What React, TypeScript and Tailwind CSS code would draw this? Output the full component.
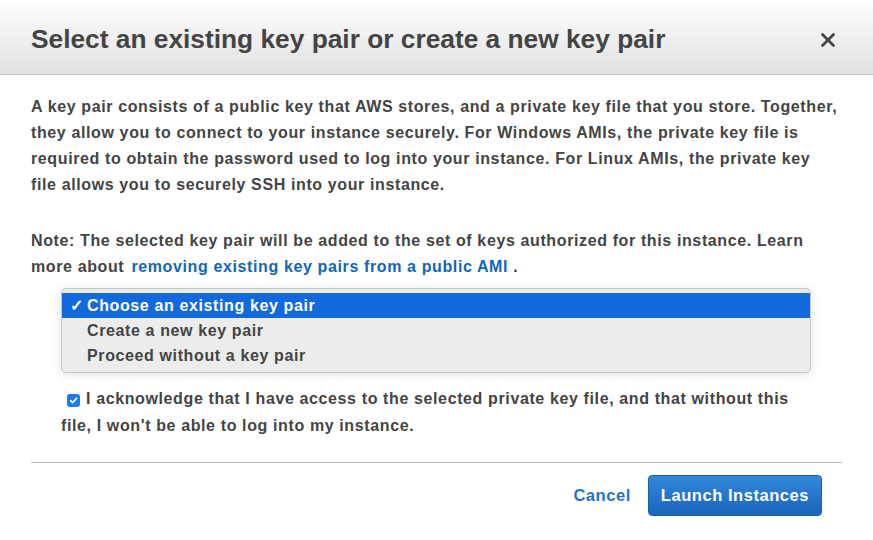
import { X } from 'lucide-react'

const options = ['Choose an existing key pair', 'Create a new key pair', 'Proceed without a key pair']

const App = () => {
  return (
    <div className="h-[540px] w-[873px] overflow-hidden bg-white font-['Liberation_Sans',Arial,sans-serif] text-[#444]">
      <header className="flex h-[75px] items-center justify-between border-b border-[#c6c6c6] bg-gradient-to-b from-white to-[#e1e1e1] pl-[31px] pr-[34px]">
        <h1 className="pt-[6px] text-[26.3px] font-bold text-[#444]">
          Select an existing key pair or create a new key pair
        </h1>
        <button type="button" className="mt-[6px] text-[#444]">
          <X size={22} strokeWidth={3} />
        </button>
      </header>

      <div className="whitespace-nowrap px-[31px] pt-[19px] tracking-[0.62px]">
        <p className="text-[16px] font-bold leading-[26px]">
          A key pair consists of a public key that AWS stores, and a private key file that you store. Together,
          <br />
          they allow you to connect to your instance securely. For Windows AMIs, the private key file is
          <br />
          required to obtain the password used to log into your instance. For Linux AMIs, the private key
          <br />
          file allows you to securely SSH into your instance.
        </p>

        <p className="mt-[30px] text-[16px] font-bold leading-[26px]">
          Note: The selected key pair will be added to the set of keys authorized for this instance. Learn
          <br />
          more about{' '}
          <a href="#" className="ml-[2px] text-[#1166bb]">
            removing existing key pairs from a public AMI
          </a>{' '}
          .
        </p>

        <div className="ml-[30px] mt-[8px] w-[750px] rounded-[5px] border border-[#c9c9c9] bg-[#ececec] py-[4px] shadow-[0_2px_10px_rgba(0,0,0,0.12)]">
          {options.map((option, index) => (
            <div
              key={option}
              className={
                index === 0
                  ? 'flex h-[25px] items-center bg-[#1169dc] pl-[8px] text-[16px] font-bold text-white'
                  : 'flex h-[25px] items-center pl-[25px] text-[16px] font-bold text-[#444]'
              }
            >
              {index === 0 && <span className="w-[17px]">✓</span>}
              {option}
            </div>
          ))}
        </div>

        <div className="ml-[30px] mt-[12px] text-[16px] font-bold leading-[27px]">
          <span className="ml-[6px] mr-[6px] inline-flex h-[13px] w-[13px] translate-y-[1px] items-center justify-center rounded-[3px] bg-[#1a7cf5]">
            <svg width="9" height="9" viewBox="0 0 10 10" fill="none">
              <path d="M1.8 5.2 L4 7.4 L8.3 2.4" stroke="white" strokeWidth="1.8" strokeLinecap="round" strokeLinejoin="round" />
            </svg>
          </span>
          I acknowledge that I have access to the selected private key file, and that without this
          <br />
          file, I won't be able to log into my instance.
        </div>

        <div className="mt-[23px] border-t border-[#bbb]" />

        <div className="flex items-center justify-end gap-[17px] pr-[20px] pt-[12px] tracking-[0.55px]">
          <button type="button" className="text-[16.5px] font-bold text-[#1d75cc]">
            Cancel
          </button>
          <button
            type="button"
            className="h-[41px] rounded-[4px] border border-[#1b60b2] bg-gradient-to-b from-[#3188db] to-[#1a64be] px-[12px] text-[16.5px] font-bold text-white"
          >
            Launch Instances
          </button>
        </div>
      </div>
    </div>
  )
}

export default App
